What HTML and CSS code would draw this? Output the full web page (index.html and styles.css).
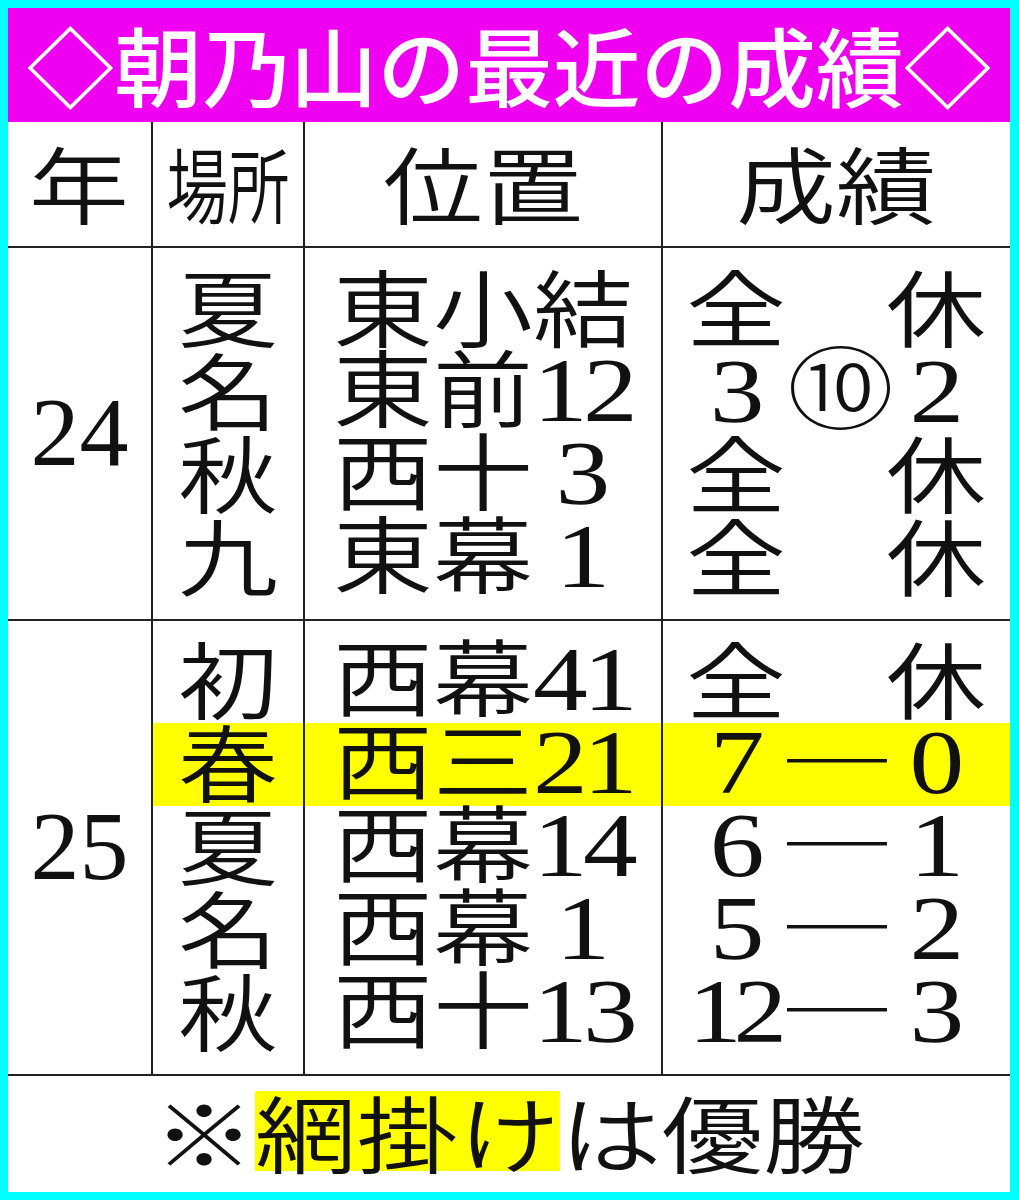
FILE: index.html
```html
<!DOCTYPE html>
<html lang="ja">
<head>
<meta charset="utf-8">
<title>朝乃山の最近の成績</title>
<link rel="stylesheet" href="styles.css">
</head>
<body>
<div class="frame">
  <div class="title"><span class="tt">◇朝乃山の最近の成績◇</span></div>

  <div class="grid head">
    <div class="c c1"><span class="t">年</span></div>
    <div class="c c2"><span class="t narrow">場所</span></div>
    <div class="c c3"><span class="t">位置</span></div>
    <div class="c c4"><span class="t">成績</span></div>
  </div>

  <div class="grid group g24">
    <div class="c c1 year">24</div>
    <div class="c c2 col">
      <div class="r"><span class="t">夏</span></div>
      <div class="r"><span class="t">名</span></div>
      <div class="r"><span class="t">秋</span></div>
      <div class="r"><span class="t">九</span></div>
    </div>
    <div class="c c3 col">
      <div class="r"><span class="t">東小結</span></div>
      <div class="r"><span class="t">東前<b class="n2">12</b></span></div>
      <div class="r"><span class="t">西十<b class="n1">3</b></span></div>
      <div class="r"><span class="t">東幕<b class="n1">1</b></span></div>
    </div>
    <div class="c c4 col">
      <div class="r"><span class="t">全　休</span></div>
      <div class="r"><span class="t"><b class="n1">3</b><span class="circ">⑩</span><b class="n1">2</b></span></div>
      <div class="r"><span class="t">全　休</span></div>
      <div class="r"><span class="t">全　休</span></div>
    </div>
  </div>

  <div class="grid group g25">
    <div class="c c1 year">25</div>
    <div class="c c2 col">
      <div class="r"><span class="t">初</span></div>
      <div class="r win"><span class="t">春</span></div>
      <div class="r"><span class="t">夏</span></div>
      <div class="r"><span class="t">名</span></div>
      <div class="r"><span class="t">秋</span></div>
    </div>
    <div class="c c3 col">
      <div class="r"><span class="t">西幕<b class="n2">41</b></span></div>
      <div class="r win"><span class="t">西三<b class="n2">21</b></span></div>
      <div class="r"><span class="t">西幕<b class="n2">14</b></span></div>
      <div class="r"><span class="t">西幕<b class="n1">1</b></span></div>
      <div class="r"><span class="t">西十<b class="n2">13</b></span></div>
    </div>
    <div class="c c4 col">
      <div class="r"><span class="t">全　休</span></div>
      <div class="r win"><span class="t"><b class="n1">7</b><span class="dash">─</span><b class="n1">0</b></span></div>
      <div class="r"><span class="t"><b class="n1">6</b><span class="dash">─</span><b class="n1">1</b></span></div>
      <div class="r"><span class="t"><b class="n1">5</b><span class="dash">─</span><b class="n1">2</b></span></div>
      <div class="r"><span class="t"><b class="n2 cell">12</b><span class="dash">─</span><b class="n1">3</b></span></div>
    </div>
  </div>

  <div class="foot"><span class="t">※<span class="mark">網掛け</span>は優勝</span></div>
</div>
</body>
</html>
```

FILE: styles.css
```css
* {
  box-sizing: border-box;
  margin: 0;
  padding: 0;
}

html,
body {
  background: #00ffff;
}

body {
  padding: 8px 9px 8px 8px;
  font-family: "Noto Sans CJK JP", sans-serif;
  color: #111;
}

.frame {
  background: #fff;
  height: 1184px;
  display: flex;
  flex-direction: column;
}

.title {
  height: 114px;
  flex: none;
  background: #f000f0;
  color: #fff;
  display: flex;
  align-items: center;
  justify-content: center;
  padding-bottom: 2px;
}

.tt {
  display: inline-block;
  font-size: 86px;
  font-weight: 500;
  line-height: 100px;
  transform: scaleX(1.02);
  white-space: nowrap;
}

.grid {
  display: grid;
  grid-template-columns: 145px 152px 358px 347px;
  border-bottom: 2px solid #222;
  flex: none;
}

.head {
  height: 126px;
}

.head .c {
  padding-bottom: 6px;
}

.g24 {
  height: 373px;
}

.g25 {
  height: 455px;
}

.c {
  display: flex;
  align-items: center;
  justify-content: center;
}

.c1,
.c2,
.c3 {
  border-right: 2px solid #222;
}

.col {
  flex-direction: column;
  align-items: stretch;
}

.r {
  height: 83px;
  display: flex;
  align-items: center;
  justify-content: center;
  padding-bottom: 10px;
}

.r.win {
  background: #ffff00;
}

.t {
  display: inline-block;
  font-size: 84px;
  line-height: 73px;
  font-weight: 350;
  white-space: pre;
  transform: scaleX(1.19);
}

.t.narrow {
  font-size: 82px;
  transform: scaleX(0.75);
}

.year {
  font-family: "Liberation Serif", serif;
  font-size: 98px;
  line-height: 1;
  padding-bottom: 4px;
}

.n1,
.n2 {
  font-family: "Liberation Serif", serif;
  font-weight: 400;
  font-size: 92px;
}

.n1 {
  display: inline-block;
  width: 84px;
  text-align: center;
}

.n2 {
  letter-spacing: -4px;
}

.n2.cell {
  display: inline-block;
  width: 84px;
  text-align: center;
  font-size: 90px;
  letter-spacing: -7px;
  padding-right: 6px;
}

.circ {
  display: inline-block;
  width: 84px;
  text-align: center;
  font-size: 90px;
  font-weight: 300;
}

.dash {
  display: inline-block;
  width: 84px;
  font-weight: 300;
  text-align: center;
}

.foot {
  flex: 1;
  display: flex;
  align-items: center;
  justify-content: center;
  padding-bottom: 6px;
}

.foot .t {
  transform: scaleX(1.21);
}

.mark {
  display: inline-block;
  background: #ffff00;
  line-height: 80px;
}
```
